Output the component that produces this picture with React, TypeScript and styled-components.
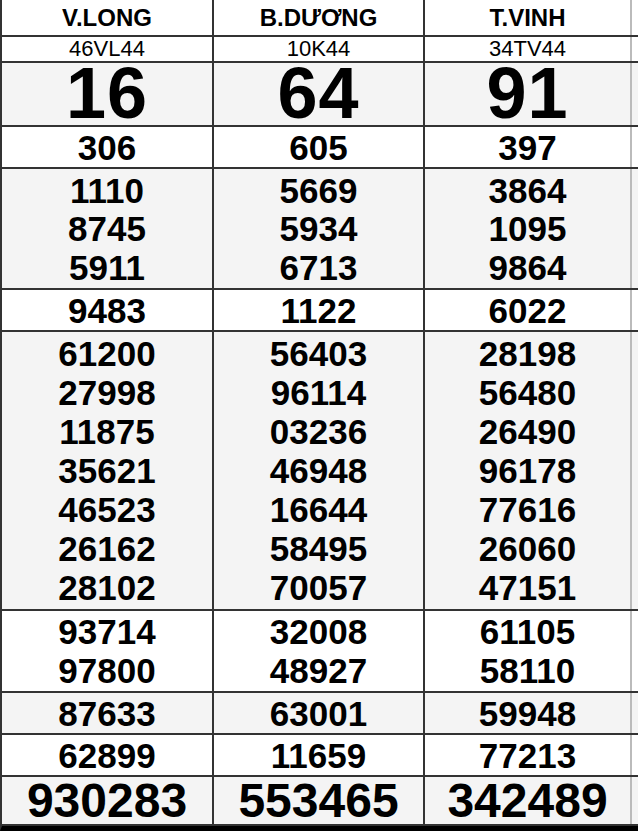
import styled, { createGlobalStyle } from 'styled-components'

const GlobalStyle = createGlobalStyle`
  html, body {
    margin: 0;
    padding: 0;
    background: #fff;
  }
  body {
    font-family: "Liberation Sans", Arial, sans-serif;
    color: #000;
  }
`

type Prize = {
  key: string
  size: 'head' | 'code' | 'big' | 'normal' | 'special'
  height: number
  shaded: boolean
  values: string[][]
}

const columns = ['V.LONG', 'B.DƯƠNG', 'T.VINH']

const prizes: Prize[] = [
  { key: 'code', size: 'code', height: 24, shaded: false, values: [['46VL44'], ['10K44'], ['34TV44']] },
  { key: 'g8', size: 'big', height: 62, shaded: true, values: [['16'], ['64'], ['91']] },
  { key: 'g7', size: 'normal', height: 40, shaded: false, values: [['306'], ['605'], ['397']] },
  {
    key: 'g6', size: 'normal', height: 119, shaded: true,
    values: [['1110', '8745', '5911'], ['5669', '5934', '6713'], ['3864', '1095', '9864']],
  },
  { key: 'g5', size: 'normal', height: 40, shaded: false, values: [['9483'], ['1122'], ['6022']] },
  {
    key: 'g4', size: 'normal', height: 277, shaded: true,
    values: [
      ['61200', '27998', '11875', '35621', '46523', '26162', '28102'],
      ['56403', '96114', '03236', '46948', '16644', '58495', '70057'],
      ['28198', '56480', '26490', '96178', '77616', '26060', '47151'],
    ],
  },
  {
    key: 'g3', size: 'normal', height: 80, shaded: false,
    values: [['93714', '97800'], ['32008', '48927'], ['61105', '58110']],
  },
  { key: 'g2', size: 'normal', height: 40, shaded: true, values: [['87633'], ['63001'], ['59948']] },
  { key: 'g1', size: 'normal', height: 40, shaded: false, values: [['62899'], ['11659'], ['77213']] },
  { key: 'db', size: 'special', height: 47, shaded: true, values: [['930283'], ['553465'], ['342489']] },
]

const fontSizes = {
  head: '24px',
  code: '22px',
  big: '72px',
  normal: '35px',
  special: '48px',
}

const lineHeights = {
  head: 1,
  code: 1,
  big: 0.8,
  normal: 1,
  special: 0.9,
}

const Table = styled.div`
  width: 638px;
  border-left: 2px solid #333;
  box-sizing: border-box;
  border-bottom: 5px solid #000;
`

const Row = styled.div<{ $height: number; $shaded: boolean }>`
  display: grid;
  grid-template-columns: 212px 211px 207px;
  height: ${p => p.$height}px;
  border-bottom: 2px solid #333;
  background: ${p => (p.$shaded ? '#f4f4f4' : '#fff')};
`

const Cell = styled.div`
  display: flex;
  flex-direction: column;
  justify-content: space-evenly;
  align-items: center;
  border-right: 2px solid #333;

  &:last-child {
    border-right-color: #bbb;
  }
`

const Text = styled.span<{ $size: Prize['size'] }>`
  display: block;
  font-size: ${p => fontSizes[p.$size]};
  font-weight: ${p => (p.$size === 'code' ? 400 : 700)};
  line-height: ${p => lineHeights[p.$size]};
  letter-spacing: ${p => (p.$size === 'big' ? '1px' : '0')};
`

export default function App() {
  return (
    <>
      <GlobalStyle />
      <Table>
        <Row $height={35} $shaded={false}>
          {columns.map(name => (
            <Cell key={name}>
              <Text $size="head">{name}</Text>
            </Cell>
          ))}
        </Row>
        {prizes.map(prize => (
          <Row key={prize.key} $height={prize.height} $shaded={prize.shaded}>
            {prize.values.map((list, i) => (
              <Cell key={i}>
                {list.map(v => (
                  <Text key={v} $size={prize.size}>{v}</Text>
                ))}
              </Cell>
            ))}
          </Row>
        ))}
      </Table>
    </>
  )
}
